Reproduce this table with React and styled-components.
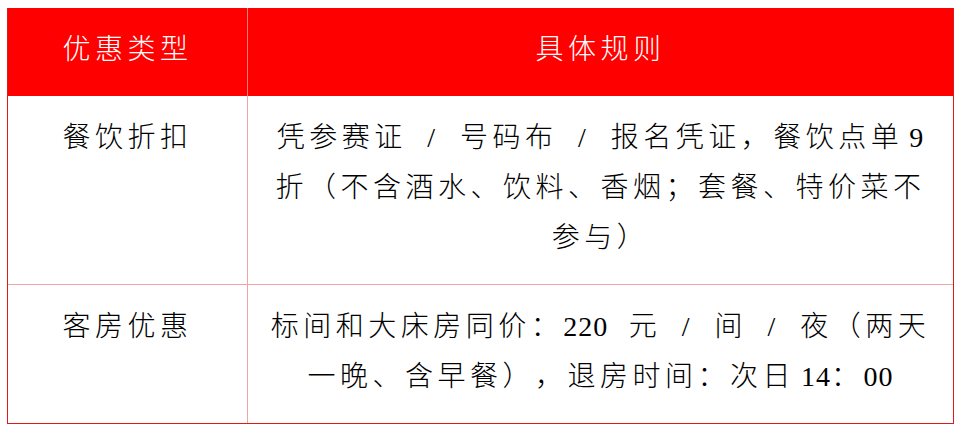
import React from "react";
import styled, { createGlobalStyle } from "styled-components";

const GlobalStyle = createGlobalStyle`
  body {
    margin: 0;
    padding: 8px 7px;
    background: #ffffff;
    font-family: "Liberation Serif", "Noto Sans CJK SC", serif;
  }
`;

const Table = styled.div`
  width: 947px;
  box-sizing: border-box;
  border: 1px solid #dc1c1c;
  border-top: none;
`;

const Row = styled.div`
  display: grid;
  grid-template-columns: 239px 1fr;
  height: ${(props) => props.$height}px;
  background: ${(props) => (props.$head ? "#ff0000" : "#ffffff")};
  color: ${(props) => (props.$head ? "#ffffff" : "#000000")};
  border-bottom: ${(props) => (props.$divider ? "1px solid #f4a3a3" : "none")};
`;

const Cell = styled.div`
  padding: 17px ${(props) => (props.$wide ? "20px" : "0")} 0;
  border-left: ${(props) =>
    props.$wide ? `1px solid ${props.$head ? "#f87a7a" : "#f4a3a3"}` : "none"};
  font-size: 28px;
  font-weight: 300;
  line-height: 50px;
  letter-spacing: 4.5px;
  word-spacing: 9px;
  text-align: center;
  text-spacing-trim: space-all;
  text-autospace: no-autospace;
`;

/* latin digits: no extra tracking, small gap after a CJK glyph */
const Num = styled.span`
  letter-spacing: 1px;
  margin-left: ${(props) => (props.$gap ? "6px" : "0")};
`;

const rows = [
  {
    type: "餐饮折扣",
    height: 188,
    rule: (
      <>
        凭参赛证 / 号码布 / 报名凭证，餐饮点单<Num $gap>9</Num>
        折（不含酒水、饮料、香烟；套餐、特价菜不参与）
      </>
    ),
  },
  {
    type: "客房优惠",
    height: 138,
    rule: (
      <>
        标间和大床房同价：<Num>220</Num> 元 / 间 / 夜（两天一晚、含早餐），退房时间：次日
        <Num $gap>14</Num>：<Num>00</Num>
      </>
    ),
  },
];

export default function App() {
  return (
    <>
      <GlobalStyle />
      <Table>
        <Row $head $height={88}>
          <Cell $head>优惠类型</Cell>
          <Cell $head $wide>
            具体规则
          </Cell>
        </Row>
        {rows.map((row, i) => (
          <Row key={row.type} $height={row.height} $divider={i < rows.length - 1}>
            <Cell>{row.type}</Cell>
            <Cell $wide>{row.rule}</Cell>
          </Row>
        ))}
      </Table>
    </>
  );
}
